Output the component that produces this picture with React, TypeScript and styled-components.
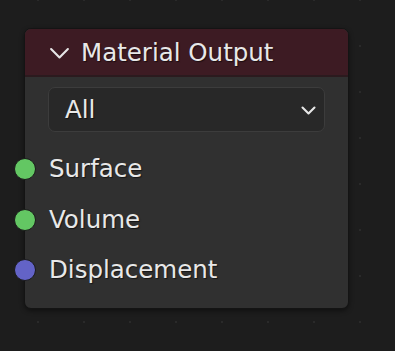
import React from "react";
import styled, { createGlobalStyle } from "styled-components";

const GlobalStyle = createGlobalStyle`
  html, body {
    margin: 0;
    padding: 0;
    width: 395px;
    height: 351px;
    overflow: hidden;
    background-color: #1d1d1d;
  }
  body {
    font-family: "DejaVu Sans", "Liberation Sans", sans-serif;
  }
`;

const Canvas = styled.div`
  width: 395px;
  height: 351px;
  box-sizing: border-box;
  padding: 28px 0 0 24px;
  background-color: #1d1d1d;
  background-image: radial-gradient(circle, #2a2a2a 1.1px, transparent 1.3px);
  background-size: 46px 46px;
  background-position: 15px -23px;
`;

const Node = styled.div`
  width: 325px;
  height: 281px;
  box-sizing: border-box;
  border: 1px solid #141414;
  border-radius: 7px;
  background: #303030;
  box-shadow: 0 2px 5px rgba(0, 0, 0, 0.45);
  display: flex;
  flex-direction: column;
`;

const Header = styled.div`
  height: 48px;
  flex-shrink: 0;
  box-sizing: border-box;
  display: flex;
  align-items: center;
  gap: 11px;
  padding: 2px 0 0 24px;
  background: #3d1b23;
  border-radius: 6px 6px 0 0;
  border-bottom: 2px solid #2b1a1e;
`;

const Title = styled.span`
  color: #e8e8e8;
  font-size: 24.5px;
  line-height: 1;
  text-shadow: 1px 1px 1px rgba(0, 0, 0, 0.55);
  white-space: nowrap;
`;

const Body = styled.div`
  display: flex;
  flex-direction: column;
  padding: 10px 0 0;
`;

const Select = styled.div`
  margin: 0 23px;
  height: 45px;
  box-sizing: border-box;
  border: 1px solid #3c3c3c;
  border-radius: 7px;
  background: #282828;
  display: flex;
  align-items: center;
  justify-content: space-between;
  padding: 2px 8px 0 16px;
`;

const SelectLabel = styled.span`
  color: #e8e8e8;
  font-size: 24.5px;
  line-height: 1;
  text-shadow: 1px 1px 1px rgba(0, 0, 0, 0.55);
`;

const Sockets = styled.div`
  display: flex;
  flex-direction: column;
  margin-top: 12px;
`;

const Row = styled.div`
  height: 50.5px;
  display: flex;
  align-items: center;
  position: relative;
  padding-left: 24px;
`;

const Socket = styled.span<{ $color: string }>`
  position: absolute;
  left: -11px;
  top: 50%;
  width: 20px;
  height: 20px;
  transform: translateY(-50%);
  border-radius: 50%;
  background: ${(p) => p.$color};
  border: 1.5px solid #1a1a1a;
`;

const Label = styled.span`
  color: #e8e8e8;
  font-size: 24.5px;
  line-height: 1;
  text-shadow: 1px 1px 1px rgba(0, 0, 0, 0.55);
`;

function Chevron({ size, stroke }: { size: number; stroke: number }) {
  return (
    <svg width={size} height={size * 0.6} viewBox="0 0 20 12" fill="none">
      <path
        d="M2 2 L10 10 L18 2"
        stroke="#e6e6e6"
        strokeWidth={stroke}
        strokeLinecap="round"
        strokeLinejoin="round"
      />
    </svg>
  );
}

const sockets = [
  { name: "Surface", color: "#63c763" },
  { name: "Volume", color: "#63c763" },
  { name: "Displacement", color: "#6363c7" },
];

export default function App() {
  return (
    <>
      <GlobalStyle />
      <Canvas>
        <Node>
          <Header>
            <Chevron size={21} stroke={2} />
            <Title>Material Output</Title>
          </Header>
          <Body>
            <Select>
              <SelectLabel>All</SelectLabel>
              <Chevron size={15} stroke={2.8} />
            </Select>
            <Sockets>
              {sockets.map((s) => (
                <Row key={s.name}>
                  <Socket $color={s.color} />
                  <Label>{s.name}</Label>
                </Row>
              ))}
            </Sockets>
          </Body>
        </Node>
      </Canvas>
    </>
  );
}
